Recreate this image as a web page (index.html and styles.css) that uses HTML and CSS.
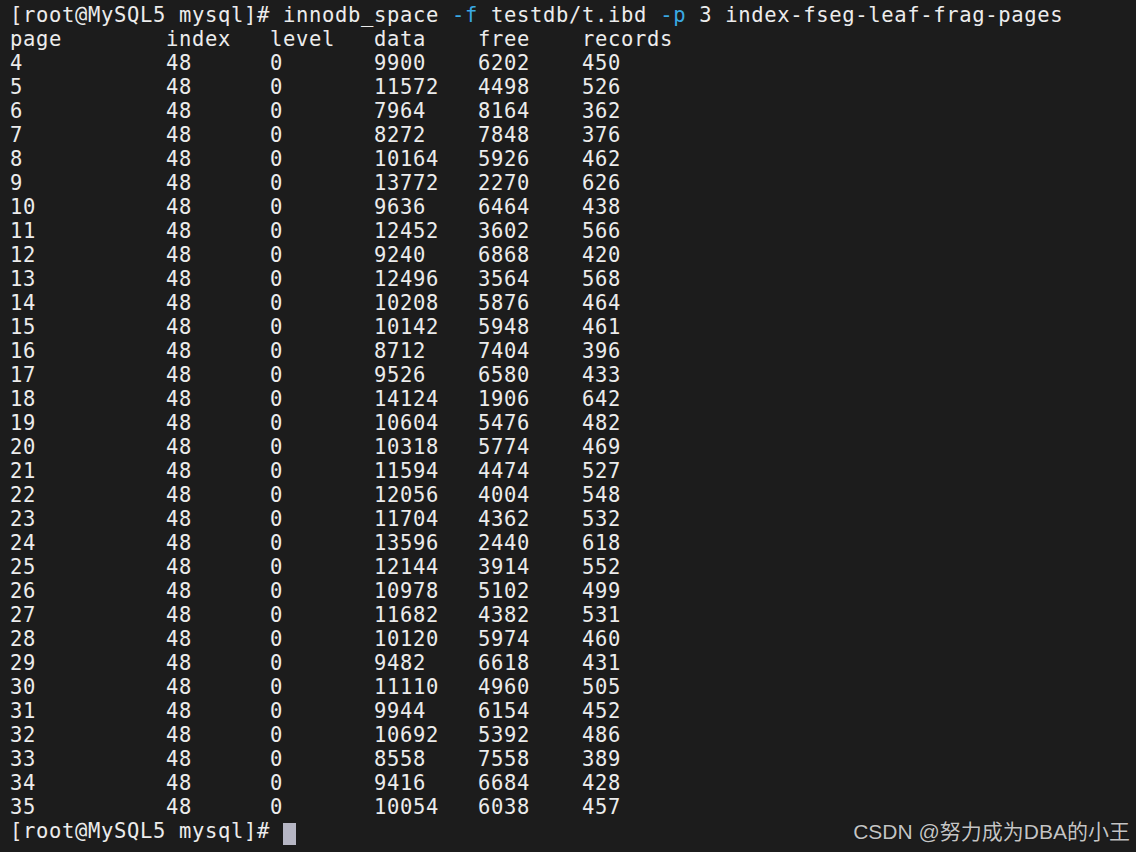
FILE: index.html
```html
<!DOCTYPE html>
<html lang="en">
<head>
	<meta charset="UTF-8">
	<title>innodb_space</title>
	<link rel="stylesheet" href="styles.css">
</head>
<body>
	<div class="term">
<pre class="out">[root@MySQL5 mysql]# innodb_space <span class="opt">-f</span> testdb/t.ibd <span class="opt">-p</span> 3 index-fseg-leaf-frag-pages
page        index   level   data    free    records
4           48      0       9900    6202    450
5           48      0       11572   4498    526
6           48      0       7964    8164    362
7           48      0       8272    7848    376
8           48      0       10164   5926    462
9           48      0       13772   2270    626
10          48      0       9636    6464    438
11          48      0       12452   3602    566
12          48      0       9240    6868    420
13          48      0       12496   3564    568
14          48      0       10208   5876    464
15          48      0       10142   5948    461
16          48      0       8712    7404    396
17          48      0       9526    6580    433
18          48      0       14124   1906    642
19          48      0       10604   5476    482
20          48      0       10318   5774    469
21          48      0       11594   4474    527
22          48      0       12056   4004    548
23          48      0       11704   4362    532
24          48      0       13596   2440    618
25          48      0       12144   3914    552
26          48      0       10978   5102    499
27          48      0       11682   4382    531
28          48      0       10120   5974    460
29          48      0       9482    6618    431
30          48      0       11110   4960    505
31          48      0       9944    6154    452
32          48      0       10692   5392    486
33          48      0       8558    7558    389
34          48      0       9416    6684    428
35          48      0       10054   6038    457
[root@MySQL5 mysql]# <span class="cursor"> </span></pre>
		<div class="mark">CSDN @努力成为DBA的小王</div>
	</div>
</body>
</html>
```
FILE: styles.css
```css
html, body {
	width: 100%;
	height: 100%;
	margin: 0;
	padding: 0;
	background: #1c1c1c;
}

.term {
	position: relative;
	height: 100%;
	box-sizing: border-box;
	padding: 3px 10px 0 10px;
	overflow: hidden;
}

.out {
	margin: 0;
	font-family: "DejaVu Sans Mono", monospace;
	font-size: 20.5px;
	letter-spacing: 0.66px;
	line-height: 24px;
	color: #ececec;
}

.opt {
	color: #3aa9e4;
}

.cursor {
	display: inline-block;
	width: 13px;
	height: 22px;
	vertical-align: -4px;
	background: #b6b6c4;
}

.mark {
	position: absolute;
	right: 6px;
	bottom: 7px;
	font-family: "Liberation Sans", "Noto Sans CJK SC", sans-serif;
	font-size: 21px;
	color: #c4c4c4;
	text-shadow: 0 0 1px #000;
}
```
